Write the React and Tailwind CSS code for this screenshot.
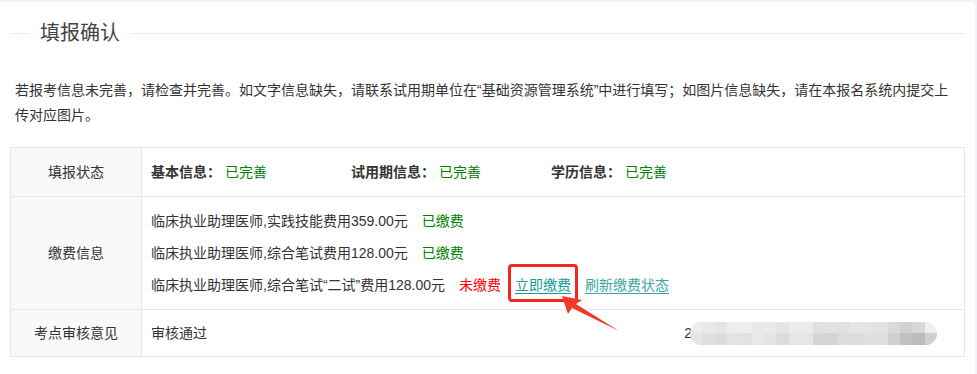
import React from "react";

const mosaic = [
  ["#ececec", "#e9e9e9", "#e4e6e6", "#efeeee", "#eeeeee", "#e9e9e9", "#eaeaea", "#e4e4e6", "#ececec", "#ebebeb", "#e0e0e0", "#e2e2e2", "#dfe1e1", "#e6e4e4", "#e4e4e2", "#e2e2e2", "#d8d9da", "#d1d1ce", "#d8d8d8", "#eeefef"],
  ["#e6e6e6", "#e0e0e0", "#dcdcdc", "#e4e4e4", "#e2e2e2", "#eaeaea", "#e4e4e4", "#dcdcdc", "#e6e6e6", "#e6e4e4", "#d6d6d6", "#d4d4d4", "#dadede", "#dcdcdc", "#e0e0e0", "#dedede", "#d0d0d2", "#c2c2be", "#bcbcb6", "#cfcfcf"],
];

const StatusItem = ({ label, value }) => (
  <div className="w-[200px] shrink-0">
    <span className="font-bold text-[#333]">{label}</span>
    <span className="ml-[4px] text-[#008000]">{value}</span>
  </div>
);

const App = () => {
  return (
    <div className="h-[374px] overflow-hidden bg-[#f0f2f5] pt-[2px] pr-[2px] font-['Liberation_Sans','Noto_Sans_CJK_SC',sans-serif] text-[14px] text-[#333]">
      <div className="h-full rounded-tr-[4px] bg-white px-[10px]">
        {/* title */}
        <div className="flex h-[62px] items-center">
          <div className="h-px w-[20px] bg-[#e8e8e8]" />
          <span className="px-[10px] text-[20px] leading-none text-[#444]">填报确认</span>
          <div className="h-px flex-1 bg-[#e8e8e8]" />
        </div>

        <p className="mt-[14px] pl-[5px] pr-[10px] leading-[25px]">
          若报考信息未完善，请检查并完善。如文字信息缺失，请联系试用期单位在“基础资源管理系统”中进行填写；如图片信息缺失，请在本报名系统内提交上传对应图片。
        </p>

        {/* table */}
        <div className="mt-[19px] border border-[#e6e6e6]">
          <div className="flex h-[48px]">
            <div className="flex w-[131px] shrink-0 items-center justify-center border-r border-[#e6e6e6] bg-[#f9f9f9]">
              填报状态
            </div>
            <div className="flex items-center pl-[9px]">
              <StatusItem label="基本信息：" value="已完善" />
              <StatusItem label="试用期信息：" value="已完善" />
              <StatusItem label="学历信息：" value="已完善" />
            </div>
          </div>

          <div className="flex h-[113px] border-t border-[#e6e6e6]">
            <div className="flex w-[131px] shrink-0 items-center justify-center border-r border-[#e6e6e6] bg-[#f9f9f9]">
              缴费信息
            </div>
            <div className="flex flex-col justify-center pl-[9px] leading-[32px]">
              <div>
                临床执业助理医师,实践技能费用359.00元
                <span className="ml-[14px] text-[#008000]">已缴费</span>
              </div>
              <div>
                临床执业助理医师,综合笔试费用128.00元
                <span className="ml-[14px] text-[#008000]">已缴费</span>
              </div>
              <div className="flex">
                <span>临床执业助理医师,综合笔试“二试”费用128.00元</span>
                <span className="ml-[14px] text-[#ff0000]">未缴费</span>
                <span className="relative ml-[14px] text-[#179c96] underline underline-offset-[3px]">
                  立即缴费
                  <span className="absolute -left-[7px] -right-[7px] -top-[5px] -bottom-[1px] rounded-[4px] border-[3px] border-[#f2281c]" />
                  <svg className="absolute left-[40px] top-[20px]" width="70" height="45" viewBox="0 0 70 45">
                    <polygon points="7,7 27,11 21,15 64,42 17,19 13,25" fill="#f23a28" />
                  </svg>
                </span>
                <span className="ml-[14px] text-[#3fa6a0] underline underline-offset-[3px]">刷新缴费状态</span>
              </div>
            </div>
          </div>

          <div className="flex h-[47px] border-t border-[#e6e6e6]">
            <div className="flex w-[131px] shrink-0 items-center justify-center border-r border-[#e6e6e6] bg-[#f9f9f9]">
              考点审核意见
            </div>
            <div className="flex flex-1 items-center justify-between pl-[9px] pr-[27px]">
              <span>审核通过</span>
              <div className="flex items-center">
                <span>2</span>
                <div className="-ml-[2px] flex h-[23px] w-[247px] flex-col overflow-hidden rounded-full">
                  {mosaic.map((row, i) => (
                    <div key={i} className="flex flex-1">
                      {row.map((c, j) => (
                        <div key={j} className="flex-1" style={{ backgroundColor: c }} />
                      ))}
                    </div>
                  ))}
                </div>
              </div>
            </div>
          </div>
        </div>
      </div>
    </div>
  );
};

export default App;
